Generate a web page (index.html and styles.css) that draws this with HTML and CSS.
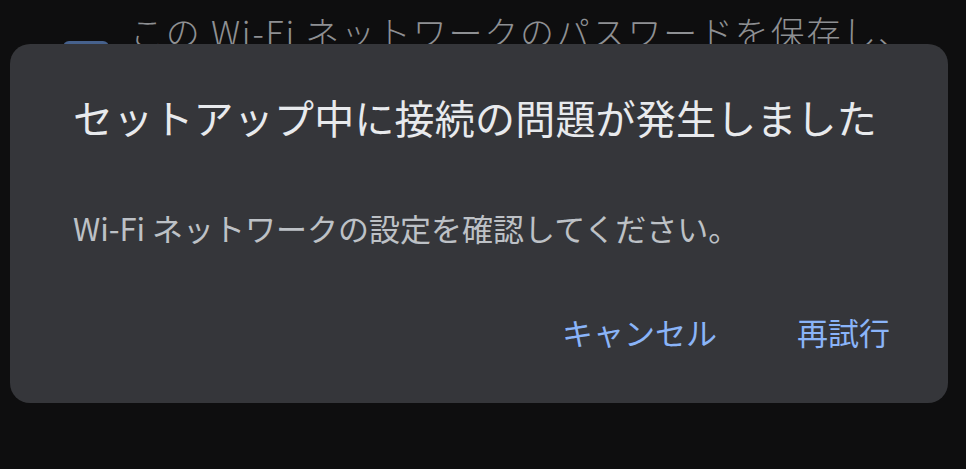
FILE: index.html
```html
<!DOCTYPE html>
<html lang="ja">
<head>
  <meta charset="UTF-8" />
  <meta name="viewport" content="width=device-width, initial-scale=1.0" />
  <title>Wi-Fi セットアップ</title>
  <link rel="stylesheet" href="styles.css">
</head>
<body>
  <div class="page">
    <div class="save-row">
      <span class="checkbox"></span>
      <span class="save-text">この Wi-Fi ネットワークのパスワードを保存し、</span>
    </div>
  </div>

  <div class="dialog">
    <h1>セットアップ中に接続の問題が発生しました</h1>
    <p>Wi-Fi ネットワークの設定を確認してください。</p>
    <div class="actions">
      <button type="button">キャンセル</button>
      <button type="button">再試行</button>
    </div>
  </div>
</body>
</html>
```

FILE: styles.css
```css
html, body {
  height: 100%;
}
body {
  margin: 0;
  background: #0e0e0f;
  font-family: 'Noto Sans CJK JP', 'Noto Sans', sans-serif;
  overflow: hidden;
}
.page {
  padding: 8px 0 0 63px;
}
.save-row {
  display: flex;
  align-items: flex-start;
  gap: 21px;
}
.checkbox {
  width: 46px;
  height: 46px;
  margin-top: 33px;
  border-radius: 6px;
  background: #46618c;
  flex-shrink: 0;
}
.save-text {
  font-size: 34px;
  font-weight: 300;
  line-height: 48px;
  color: #8e9093;
  letter-spacing: 1.8px;
  white-space: nowrap;
}

/* диалог поверх страницы */
.dialog {
  position: absolute;
  left: 10px;
  top: 44px;
  width: 938px;
  height: 359px;
  box-sizing: border-box;
  padding: 45px 58px 0 63px;
  background: #35363a;
  border-radius: 20px;
  display: flex;
  flex-direction: column;
}
h1 {
  margin: 0;
  font-size: 40px;
  font-weight: 400;
  line-height: 56px;
  color: #e8eaed;
  letter-spacing: 0.2px;
}
p {
  margin: 63px 0 0;
  font-size: 31px;
  line-height: 40px;
  color: #bdc1c6;
}
.actions {
  display: flex;
  justify-content: flex-end;
  gap: 80px;
  margin-top: 63px;
}
button {
  border: none;
  background: none;
  padding: 0;
  font-family: inherit;
  font-size: 31px;
  line-height: 42px;
  color: #8ab4f8;
  cursor: pointer;
}
```
